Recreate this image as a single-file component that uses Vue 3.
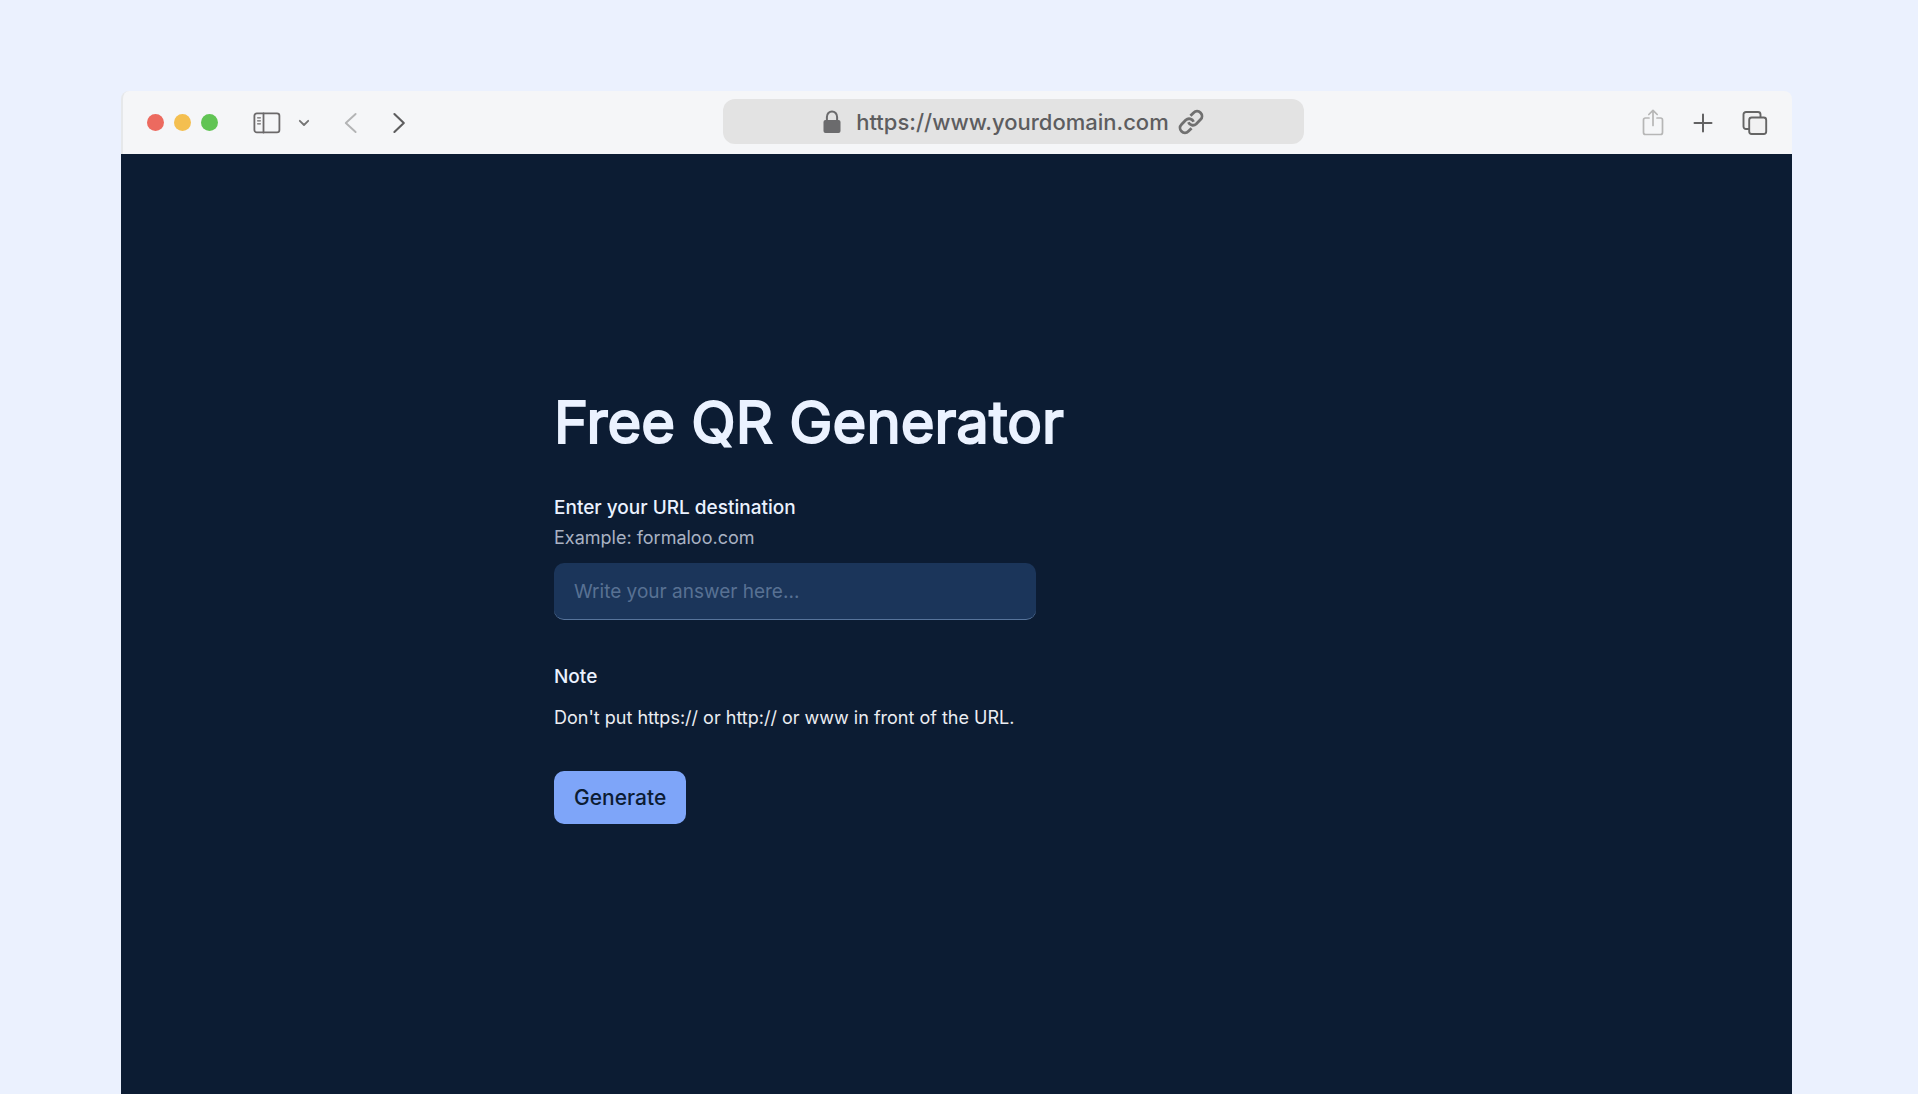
<script setup>
import { ref } from 'vue'

const destination = ref('')
</script>

<template>
  <div class="page">
    <div class="window">
      <header class="toolbar">
        <div class="tools-left">
          <div class="lights">
            <span class="light red"></span>
            <span class="light yellow"></span>
            <span class="light green"></span>
          </div>
          <button class="tool sidebar" type="button" aria-label="Show sidebar">
            <svg width="28" height="22" viewBox="0 0 28 22" fill="none" stroke="#6b696a" stroke-width="1.8" stroke-linecap="round">
              <rect x="1.4" y="1.4" width="25" height="19" rx="2.4" />
              <path d="M10.5 1.5v19" />
              <path d="M4.6 5.8h2.8M4.6 8.8h2.8M4.6 11.8h2.8" stroke-width="1.3" />
            </svg>
          </button>
          <button class="tool menu" type="button" aria-label="Sidebar options">
            <svg width="12" height="8" viewBox="0 0 12 8" fill="none" stroke="#747474" stroke-width="1.8" stroke-linecap="round" stroke-linejoin="round">
              <path d="M1.8 1.8 6 6l4.2-4.2" />
            </svg>
          </button>
          <button class="tool back" type="button" aria-label="Back">
            <svg width="14" height="22" viewBox="0 0 14 22" fill="none" stroke="#b3b4b5" stroke-width="1.9" stroke-linecap="round" stroke-linejoin="round">
              <path d="M11.6 2 1.8 11l9.8 9" />
            </svg>
          </button>
          <button class="tool forward" type="button" aria-label="Forward">
            <svg width="14" height="22" viewBox="0 0 14 22" fill="none" stroke="#5d5d5e" stroke-width="2.1" stroke-linecap="round" stroke-linejoin="round">
              <path d="M2.4 2l9.4 9-9.4 9" />
            </svg>
          </button>
        </div>
        <div class="address">
          <svg width="18" height="24" viewBox="0 0 18 24" aria-hidden="true">
            <rect x="0.5" y="10" width="17" height="13" rx="2" fill="#6b6b6d" />
            <path d="M3.9 11V7a5.1 5.6 0 0 1 10.2 0V11" fill="none" stroke="#6b6b6d" stroke-width="2" />
          </svg>
          <span class="url">https://www.yourdomain.com</span>
          <svg width="26" height="26" viewBox="0 0 24 24" fill="none" stroke="#707070" stroke-width="2.6" stroke-linecap="butt" stroke-linejoin="round" aria-hidden="true">
            <path d="M9.6 12.2a4.5 4.5 0 0 0 7.2 1.6l4-4a4.500 4.500 0 0 0-6.400-6.400l-2.900 2.900" />
            <path d="M14.400 11.800a4.500 4.500 0 0 0-7.200-1.600l-4 4a4.500 4.500 0 0 0 6.400 6.400l2.900-2.900" />
          </svg>
        </div>
        <div class="tools-right">
          <button class="tool" type="button" aria-label="Share">
            <svg width="22" height="28" viewBox="0 0 22 28" fill="none" stroke="#b6b6b6" stroke-width="1.7" stroke-linecap="round" stroke-linejoin="round">
              <path d="M7 9H3.5a2 2 0 0 0-2 2V23.500a2 2 0 0 0 2 2h15a2 2 0 0 0 2-2V11a2 2 0 0 0-2-2H15" />
              <path d="M11 16.500V1.800M6.800 5.500 11 1.300 15.200 5.500" />
            </svg>
          </button>
          <button class="tool" type="button" aria-label="New tab">
            <svg width="20" height="20" viewBox="0 0 20 20" fill="none" stroke="#626263" stroke-width="2" stroke-linecap="round">
              <path d="M10 1.500v17M1.500 10h17" />
            </svg>
          </button>
          <button class="tool" type="button" aria-label="Show tabs">
            <svg width="26" height="26" viewBox="0 0 26 26" fill="#f1f1f2" stroke="#656565" stroke-width="1.9">
              <path d="M7 19H4a2.500 2.500 0 0 1-2.500-2.500v-12A2.500 2.500 0 0 1 4 2h12a2.500 2.500 0 0 1 2.500 2.500V7.500" />
              <rect x="7.200" y="7.500" width="17" height="16.500" rx="2.500" />
            </svg>
          </button>
        </div>
      </header>

      <main class="content">
        <form class="form" @submit.prevent>
          <h1>Free QR Generator</h1>
          <label for="destination">Enter your URL destination</label>
          <p class="hint">Example: formaloo.com</p>
          <input id="destination" v-model="destination" type="text" placeholder="Write your answer here..." />
          <h2>Note</h2>
          <p class="note">Don't put https:// or http:// or www in front of the URL.</p>
          <button class="submit" type="submit">Generate</button>
        </form>
      </main>
    </div>
  </div>
</template>

<style>
body {
  margin: 0;
  background: #ebf1fe;
}
</style>

<style scoped>
.page {
  box-sizing: border-box;
  min-height: 100vh;
  display: flex;
  padding: 91px 126px 0 121px;
  background: #ebf1fe;
  font-family: Inter, "Liberation Sans", sans-serif;
}

.window {
  flex: 1;
  display: flex;
  flex-direction: column;
}

.toolbar {
  display: grid;
  grid-template-columns: 600fr 582fr 488fr;
  align-items: center;
  height: 63px;
  box-sizing: border-box;
  border-left: 2px solid #e6e8ea;
  border-radius: 8px 8px 0 0;
  background: #f5f6f8;
}

.tools-left,
.tools-right,
.lights,
.address {
  display: flex;
  align-items: center;
}

.tools-left {
  padding-left: 24px;
}

.lights {
  gap: 10px;
}

.light {
  width: 17px;
  height: 17px;
  border-radius: 50%;
}

.red {
  background: #ec6a5f;
}

.yellow {
  background: #f4bf50;
}

.green {
  background: #61c454;
}

.tool {
  display: flex;
  padding: 0;
  border: 0;
  background: none;
}

.sidebar {
  margin-left: 35px;
}

.menu {
  margin-left: 17px;
}

.back {
  margin-left: 34px;
}

.forward {
  margin-left: 34px;
}

.tools-right {
  justify-content: flex-end;
  gap: 29px;
  padding-right: 24px;
}

.address {
  align-self: start;
  justify-content: center;
  height: 45px;
  margin-top: 8px;
  border-radius: 12px;
  background: #e3e3e3;
}

.url {
  margin: 0 9px 0 15px;
  font-size: 22px;
  line-height: 28px;
  font-weight: 500;
  color: #5d5d5f;
}

.content {
  flex: 1;
  padding: 0 24px 48px;
  background: #0c1c33;
  color: #ebf2ff;
}

.form {
  display: flex;
  flex-direction: column;
  align-items: flex-start;
  max-width: 805px;
  margin: 0 auto;
  padding-top: 232px;
}

h1 {
  margin: 0 0 36px;
  font-size: 58px;
  line-height: 72px;
  font-weight: 400;
  -webkit-text-stroke: 2px currentColor;
}

label,
h2 {
  margin: 0;
  font-size: 19px;
  line-height: 28px;
  font-weight: 500;
}

.hint {
  margin: 2px 0 11px;
  font-size: 18px;
  line-height: 28px;
  color: #a9b2c3;
}

input {
  box-sizing: border-box;
  width: 482px;
  max-width: 100%;
  height: 57px;
  padding: 0 20px;
  border: 0;
  border-bottom: 1px solid #57749b;
  border-radius: 10px;
  background: #1b355a;
  color: #ebf2ff;
  font: 19px Inter, "Liberation Sans", sans-serif;
}

input::placeholder {
  color: #587193;
  opacity: 1;
}

h2 {
  margin-top: 43px;
}

.note {
  margin: 13px 0 39px;
  font-size: 18px;
  line-height: 28px;
  color: #ebedf2;
}

.submit {
  height: 53px;
  padding: 0 20px;
  border: 0;
  border-radius: 10px;
  background: #7ea5f9;
  color: #0c1c33;
  font: 500 21px Inter, "Liberation Sans", sans-serif;
}
</style>
